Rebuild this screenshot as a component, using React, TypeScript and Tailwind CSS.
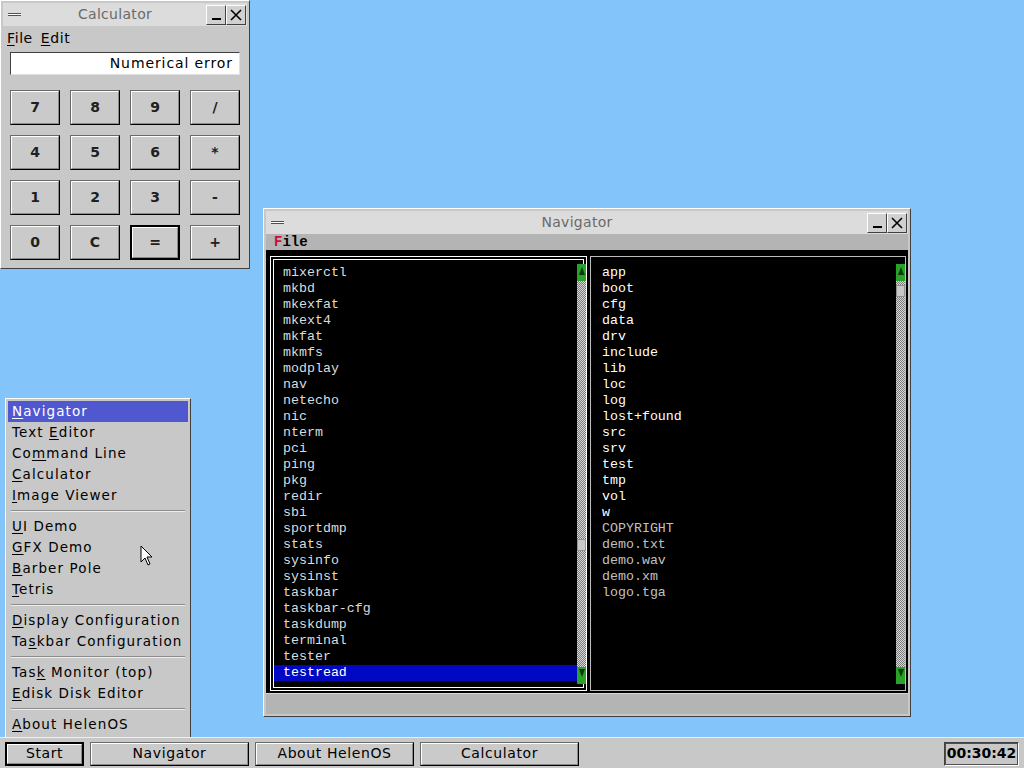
import React from 'react';

const ui = "font-['DejaVu_Sans',sans-serif]";
const mono = "font-['Liberation_Mono',monospace]";

const raised = 'border border-t-white border-l-white border-r-[#404040] border-b-[#404040]';
const checker =
  'bg-[repeating-conic-gradient(#7a7a7a_0_25%,#d8d8d8_0_50%)] bg-[length:2px_2px]';

// underline one letter of a label, win95 style
const Mnemonic: React.FC<{ text: string; at: number }> = ({ text, at }) => (
  <>
    {text.slice(0, at)}
    <span className="underline underline-offset-2">{text[at]}</span>
    {text.slice(at + 1)}
  </>
);

const TitleButton: React.FC<{ kind: 'min' | 'close' }> = ({ kind }) => (
  <div className={`w-[20px] h-[20px] bg-[#d0d0d0] ${raised} flex items-center justify-center`}>
    {kind === 'min' ? (
      <div className="w-[9px] h-[2px] bg-black mt-[9px]" />
    ) : (
      <svg width="12" height="12" viewBox="0 0 12 12">
        <path d="M1 1 L11 11 M11 1 L1 11" stroke="black" strokeWidth="1.6" />
      </svg>
    )}
  </div>
);

const TitleBar: React.FC<{ title: string }> = ({ title }) => (
  <div className="h-[23px] bg-[#dcdcdc] flex items-center px-[1px]">
    <div className="w-[20px] h-[20px] flex items-center justify-center">
      <div className="w-[13px] h-[3px] bg-white border-t border-b border-[#505050]" />
    </div>
    <div className={`flex-1 text-center text-[14px] text-[#6a6a6a] tracking-[0.3px] ${ui}`}>{title}</div>
    <TitleButton kind="min" />
    <TitleButton kind="close" />
  </div>
);

const CalcButton: React.FC<{ label: string; focused?: boolean }> = ({ label, focused }) => (
  <div
    className={`h-[35px] ${
      focused ? 'border-2 border-black' : 'border border-t-[#6a6a6a] border-l-[#6a6a6a] border-r-black border-b-black'
    }`}
  >
    <div
      className={`h-full border border-t-white border-l-white border-r-[#8a8a8a] border-b-[#8a8a8a] bg-[#cacaca] flex items-center justify-center text-[14px] font-bold text-[#202020] ${ui}`}
    >
      {label}
    </div>
  </div>
);

const Calculator = () => {
  const keys = ['7', '8', '9', '/', '4', '5', '6', '*', '1', '2', '3', '-', '0', 'C', '=', '+'];
  return (
    <div className={`absolute left-0 top-0 w-[250px] h-[269px] bg-[#c8c8c8] ${raised} p-[2px] flex flex-col`}>
      <TitleBar title="Calculator" />
      <div className={`h-[24px] flex items-center gap-[8px] px-[4px] text-[14px] tracking-[0.6px] text-black ${ui}`}>
        <span><Mnemonic text="File" at={0} /></span>
        <span><Mnemonic text="Edit" at={0} /></span>
      </div>
      <div className="mx-[7px] mt-[2px] h-[23px] bg-white border border-t-[#404040] border-l-[#404040] border-r-[#e0e0e0] border-b-[#e0e0e0] flex items-center justify-end pr-[6px]">
        <span className={`text-[14px] text-black tracking-[0.9px] ${ui}`}>Numerical error</span>
      </div>
      <div className="mt-[15px] mx-[7px] grid grid-cols-[50px_50px_50px_50px] gap-[10px]">
        {keys.map(k => (
          <CalcButton key={k} label={k} focused={k === '='} />
        ))}
      </div>
    </div>
  );
};

const Scrollbar: React.FC<{ thumbTop: number }> = ({ thumbTop }) => (
  <div className="w-[9px] flex-1 flex flex-col">
    <div className="h-[17px] bg-[#2aa22a] flex items-start justify-center pt-[3px]">
      <div className="w-0 h-0 border-l-[3px] border-r-[3px] border-b-[8px] border-l-transparent border-r-transparent border-b-[#0a3a0a]" />
    </div>
    <div className={`flex-1 flex flex-col ${checker}`}>
      <div style={{ height: thumbTop }} />
      <div className="h-[12px] bg-[#c8c8c8] border border-[#909090]" />
    </div>
    <div className="h-[17px] bg-[#2aa22a] flex items-start justify-center pt-[2px]">
      <div className="w-0 h-0 border-l-[3px] border-r-[3px] border-t-[8px] border-l-transparent border-r-transparent border-t-[#0a3a0a]" />
    </div>
  </div>
);

const leftFiles = [
  'mixerctl', 'mkbd', 'mkexfat', 'mkext4', 'mkfat', 'mkmfs', 'modplay', 'nav', 'netecho', 'nic',
  'nterm', 'pci', 'ping', 'pkg', 'redir', 'sbi', 'sportdmp', 'stats', 'sysinfo', 'sysinst',
  'taskbar', 'taskbar-cfg', 'taskdump', 'terminal', 'tester', 'testread',
];

const rightDirs = ['app', 'boot', 'cfg', 'data', 'drv', 'include', 'lib', 'loc', 'log', 'lost+found', 'src', 'srv', 'test', 'tmp', 'vol', 'w'];
const rightFiles = ['COPYRIGHT', 'demo.txt', 'demo.wav', 'demo.xm', 'logo.tga'];

const Navigator = () => (
  <div className={`absolute left-[263px] top-[208px] w-[648px] h-[509px] bg-[#c8c8c8] ${raised} p-[2px] flex flex-col`}>
    <TitleBar title="Navigator" />
    <div className={`h-[16px] bg-[#b4b4b4] flex items-center px-[8px] text-[14px] font-bold ${mono}`}>
      <span className="text-[#c8103c]">F</span>
      <span className="text-black">ile</span>
    </div>
    <div className="h-[443px] bg-black flex gap-[3px] pt-[6px] pb-[2px] pl-[4px] pr-[0px]">
      <div className="w-[317px] border border-white p-[2px] flex">
        <div className="flex-1 border border-white flex">
          <div className={`flex-1 pt-[5px] text-[13.3px] leading-[16px] ${mono}`}>
            {leftFiles.map(f => (
              <div
                key={f}
                className={`pl-[9px] h-[16px] ${f === 'testread' ? 'bg-[#0008c4] text-white' : 'text-[#dcdcdc]'}`}
              >
                {f}
              </div>
            ))}
          </div>
          <div className="flex flex-col pt-[4px] pb-[3px] -mr-[3px]">
            <Scrollbar thumbTop={258} />
          </div>
        </div>
      </div>
      <div className="w-[316px] border border-[#bcbcbc] flex">
        <div className={`flex-1 pt-[8px] pl-[11px] text-[13.3px] leading-[16px] ${mono}`}>
          {rightDirs.map(d => (
            <div key={d} className="h-[16px] text-white">{d}</div>
          ))}
          {rightFiles.map(f => (
            <div key={f} className="h-[16px] text-[#c0c0c0]">{f}</div>
          ))}
        </div>
        <div className="flex flex-col pt-[7px] pb-[6px]">
          <Scrollbar thumbTop={4} />
        </div>
      </div>
    </div>
    <div className="flex-1 bg-[#b4b4b4] border-t border-[#d8d8d8]" />
  </div>
);

type Entry = { label: string; at: number } | 'sep';
const menu: Entry[] = [
  { label: 'Navigator', at: 0 },
  { label: 'Text Editor', at: 5 },
  { label: 'Command Line', at: 2 },
  { label: 'Calculator', at: 0 },
  { label: 'Image Viewer', at: 0 },
  'sep',
  { label: 'UI Demo', at: 0 },
  { label: 'GFX Demo', at: 0 },
  { label: 'Barber Pole', at: 0 },
  { label: 'Tetris', at: 0 },
  'sep',
  { label: 'Display Configuration', at: 0 },
  { label: 'Taskbar Configuration', at: 2 },
  'sep',
  { label: 'Task Monitor (top)', at: 3 },
  { label: 'Edisk Disk Editor', at: 0 },
  'sep',
  { label: 'About HelenOS', at: 0 },
];

const StartMenu = () => (
  <div className={`absolute left-[5px] top-[398px] w-[186px] h-[341px] bg-[#c8c8c8] ${raised} p-[2px] ${ui}`}>
    {menu.map((e, i) =>
      e === 'sep' ? (
        <div key={i} className="h-[10px] flex flex-col justify-center px-[3px]">
          <div className="h-[1px] bg-[#8c8c8c]" />
          <div className="h-[1px] bg-[#eeeeee]" />
        </div>
      ) : (
        <div
          key={i}
          className={`h-[21px] flex items-center pl-[4px] text-[13.5px] tracking-[1.1px] ${
            i === 0 ? 'bg-[#5058d0] text-white' : 'text-black'
          }`}
        >
          <span><Mnemonic text={e.label} at={e.at} /></span>
        </div>
      )
    )}
  </div>
);

const TaskButton: React.FC<{ label: string; width: string; pressed?: boolean }> = ({ label, width, pressed }) => (
  <div className={`${width} h-[24px] ${pressed ? 'border-2 border-black' : 'border border-t-[#6a6a6a] border-l-[#6a6a6a] border-r-black border-b-black'}`}>
    <div className={`h-full bg-[#cacaca] border border-t-white border-l-white border-r-[#8a8a8a] border-b-[#8a8a8a] flex items-center justify-center text-[14px] tracking-[0.6px] text-black ${ui}`}>
      {label}
    </div>
  </div>
);

const Taskbar = () => (
  <div className="absolute left-0 bottom-0 w-full h-[31px] bg-[#c8c8c8] border-t border-[#eeeeee] flex items-center pl-[5px] pr-[5px] pt-[1px]">
    <div className="flex items-center gap-[6px]">
      <TaskButton label="Start" width="w-[79px]" pressed />
      <TaskButton label="Navigator" width="w-[159px]" />
      <TaskButton label="About HelenOS" width="w-[159px]" />
      <TaskButton label="Calculator" width="w-[159px]" />
    </div>
    <div className="flex-1" />
    <div className="w-[75px] h-[24px] border border-t-[#404040] border-l-[#404040] border-r-white border-b-white">
      <div className={`h-full border border-[#505050] flex items-center justify-center text-[14px] font-bold text-black ${ui}`}>
        00:30:42
      </div>
    </div>
  </div>
);

const Cursor = () => (
  <svg className="absolute left-[140px] top-[545px]" width="14" height="22" viewBox="0 0 14 22">
    <path d="M1 1 L1 17 L5 13 L8 20 L10 19 L7 12 L12 12 Z" fill="white" stroke="black" strokeWidth="1" />
  </svg>
);

export default function App() {
  return (
    <div className="relative w-[1024px] h-[768px] overflow-hidden bg-[#83c5fa]">
      <Calculator />
      <Navigator />
      <StartMenu />
      <Taskbar />
      <Cursor />
    </div>
  );
}
